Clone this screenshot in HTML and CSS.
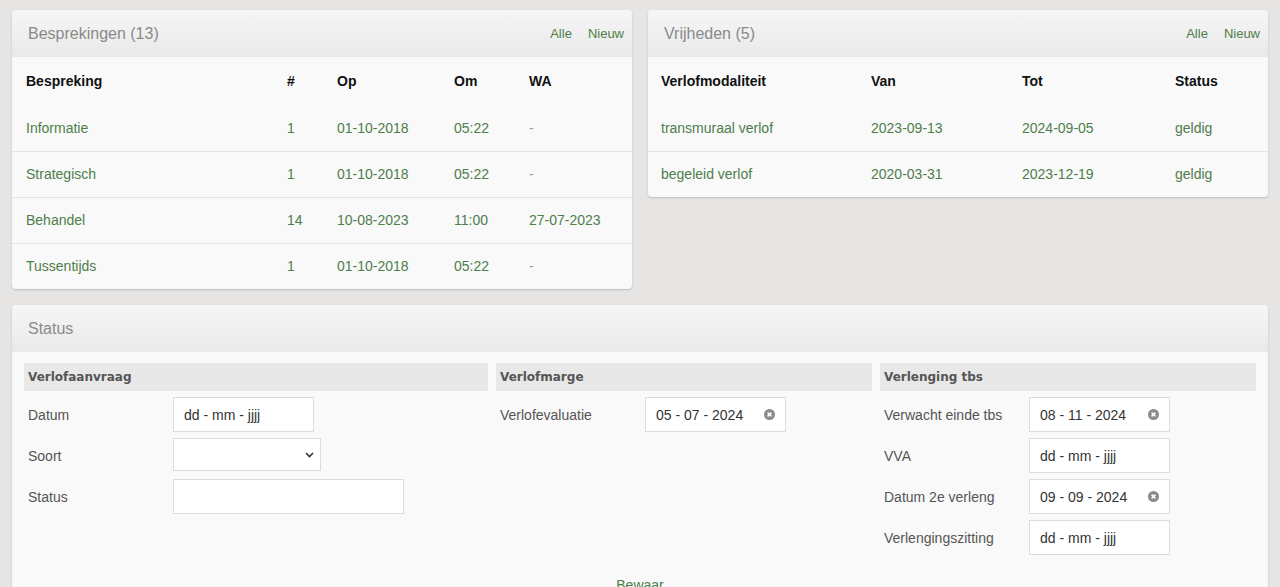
FILE: index.html
```html
<!DOCTYPE html>
<html lang="nl">
<head>
<meta charset="utf-8">
<title>Status</title>
<link rel="stylesheet" href="styles.css">
</head>
<body>
<div class="page">
  <div class="top-row">
    <section class="card">
      <header class="card-head">
        <h2 class="card-title">Besprekingen (13)</h2>
        <nav class="card-links"><a>Alle</a><a>Nieuw</a></nav>
      </header>
      <table class="list list-a">
        <colgroup><col class="a1"><col class="a2"><col class="a3"><col class="a4"><col></colgroup>
        <thead><tr><th>Bespreking</th><th>#</th><th>Op</th><th>Om</th><th>WA</th></tr></thead>
        <tbody>
          <tr><td>Informatie</td><td>1</td><td>01-10-2018</td><td>05:22</td><td class="dash">-</td></tr>
          <tr><td>Strategisch</td><td>1</td><td>01-10-2018</td><td>05:22</td><td class="dash">-</td></tr>
          <tr><td>Behandel</td><td>14</td><td>10-08-2023</td><td>11:00</td><td>27-07-2023</td></tr>
          <tr><td>Tussentijds</td><td>1</td><td>01-10-2018</td><td>05:22</td><td class="dash">-</td></tr>
        </tbody>
      </table>
    </section>
    <section class="card">
      <header class="card-head">
        <h2 class="card-title">Vrijheden (5)</h2>
        <nav class="card-links"><a>Alle</a><a>Nieuw</a></nav>
      </header>
      <table class="list list-b">
        <colgroup><col class="b1"><col class="b2"><col class="b3"><col></colgroup>
        <thead><tr><th>Verlofmodaliteit</th><th>Van</th><th>Tot</th><th>Status</th></tr></thead>
        <tbody>
          <tr><td>transmuraal verlof</td><td>2023-09-13</td><td>2024-09-05</td><td>geldig</td></tr>
          <tr><td>begeleid verlof</td><td>2020-03-31</td><td>2023-12-19</td><td>geldig</td></tr>
        </tbody>
      </table>
    </section>
  </div>

  <section class="card status-card">
    <header class="card-head">
      <h2 class="card-title">Status</h2>
    </header>
    <div class="status-body">
      <div class="groups">
        <div class="group">
          <h3 class="group-title">Verlofaanvraag</h3>
          <div class="form-row"><span class="label">Datum</span><div class="field w-date placeholder">dd - mm - jjjj</div></div>
          <div class="form-row"><span class="label">Soort</span><div class="field w-select select">
            <svg class="chev" width="9" height="6" viewBox="0 0 9 6"><path d="M1 1l3.5 3.5L8 1" fill="none" stroke="#333" stroke-width="1.6"/></svg>
          </div></div>
          <div class="form-row"><span class="label">Status</span><div class="field w-text"></div></div>
        </div>
        <div class="group">
          <h3 class="group-title">Verlofmarge</h3>
          <div class="form-row"><span class="label">Verlofevaluatie</span><div class="field w-date">05 - 07 - 2024<span class="clear"><svg width="11" height="11" viewBox="0 0 11 11"><circle cx="5.5" cy="5.5" r="5.5" fill="#8a8a8a"/><path d="M3.6 3.6l3.8 3.8M7.4 3.6l-3.8 3.8" stroke="#fff" stroke-width="1.5"/></svg></span></div></div>
        </div>
        <div class="group">
          <h3 class="group-title">Verlenging tbs</h3>
          <div class="form-row"><span class="label">Verwacht einde tbs</span><div class="field w-date">08 - 11 - 2024<span class="clear"><svg width="11" height="11" viewBox="0 0 11 11"><circle cx="5.5" cy="5.5" r="5.5" fill="#8a8a8a"/><path d="M3.6 3.6l3.8 3.8M7.4 3.6l-3.8 3.8" stroke="#fff" stroke-width="1.5"/></svg></span></div></div>
          <div class="form-row"><span class="label">VVA</span><div class="field w-date placeholder">dd - mm - jjjj</div></div>
          <div class="form-row"><span class="label">Datum 2e verleng</span><div class="field w-date">09 - 09 - 2024<span class="clear"><svg width="11" height="11" viewBox="0 0 11 11"><circle cx="5.5" cy="5.5" r="5.5" fill="#8a8a8a"/><path d="M3.6 3.6l3.8 3.8M7.4 3.6l-3.8 3.8" stroke="#fff" stroke-width="1.5"/></svg></span></div></div>
          <div class="form-row"><span class="label">Verlengingszitting</span><div class="field w-date placeholder">dd - mm - jjjj</div></div>
        </div>
      </div>
      <div class="actions"><a class="save">Bewaar</a></div>
    </div>
  </section>
</div>
</body>
</html>
```

FILE: styles.css
```css
* { box-sizing: border-box; }
html, body { margin: 0; padding: 0; }
body {
  background: #e6e5e3;
  font-family: "Liberation Sans", Arial, sans-serif;
  font-size: 14px;
  color: #333;
}
.page { padding: 10px 12px 0 12px; }
.top-row {
  display: grid;
  grid-template-columns: 1fr 1fr;
  column-gap: 16px;
  align-items: start;
}
.card {
  background: #f9f9f9;
  border-radius: 4px;
  box-shadow: 0 1px 2px rgba(0,0,0,0.18);
  overflow: hidden;
}
.card-head {
  height: 47px;
  display: flex;
  align-items: center;
  justify-content: space-between;
  padding: 0 8px 0 16px;
  background: linear-gradient(#f6f6f6, #e9e9e9);
}
.card-title {
  margin: 0;
  font-weight: normal;
  font-size: 16px;
  color: #8a8a8a;
}
.card-links { display: flex; gap: 16px; font-size: 13px; }
.card-links a { color: #4e7d4b; }

.list {
  width: 100%;
  border-collapse: collapse;
  table-layout: fixed;
}
.list th {
  height: 48px;
  text-align: left;
  font-weight: bold;
  font-size: 14px;
  color: #111;
}
.list td {
  height: 46px;
  color: #4e7d4b;
  border-top: 1px solid #e4e4e4;
}
.list tbody tr:first-child td { border-top: none; }
.list-a th, .list-a td { padding: 0 0 0 14px; }
.list-b th, .list-b td { padding: 0 0 0 13px; }
.list td.dash { color: #8fa88d; }
.a1 { width: 261px; }
.a2 { width: 50px; }
.a3 { width: 117px; }
.a4 { width: 75px; }
.b1 { width: 210px; }
.b2 { width: 151px; }
.b3 { width: 153px; }

.status-card { margin-top: 16px; min-height: 320px; }
.status-body { padding: 11px 12px 40px 12px; }
.groups {
  display: grid;
  grid-template-columns: 464px 376px 376px;
  column-gap: 8px;
}
.group-title {
  margin: 0 0 6px 0;
  height: 28px;
  line-height: 28px;
  padding-left: 4px;
  background: #e8e8e8;
  font-family: "DejaVu Sans", Verdana, sans-serif;
  font-weight: bold;
  font-size: 12px;
  color: #555;
}
.form-row {
  display: flex;
  align-items: center;
  height: 35px;
  margin-bottom: 6px;
}
.label {
  width: 149px;
  padding-left: 4px;
  color: #555;
  flex: none;
}
.field {
  height: 35px;
  background: #fff;
  border: 1px solid #dcdcdc;
  display: flex;
  align-items: center;
  padding-left: 10px;
  color: #333;
  position: relative;
}
.placeholder { color: #333; }
.w-date { width: 141px; }
.w-select { width: 148px; height: 33px; align-self: flex-start; justify-content: flex-end; padding-right: 6px; }
.w-text { width: 231px; }
.clear {
  position: absolute;
  right: 10px;
  top: 11px;
  width: 11px;
  height: 11px;
  display: block;
}
.clear svg { display: block; }
.actions {
  display: flex;
  justify-content: center;
  margin-top: 16px;
}
.save { color: #4e7d4b; font-size: 14px; }
```
